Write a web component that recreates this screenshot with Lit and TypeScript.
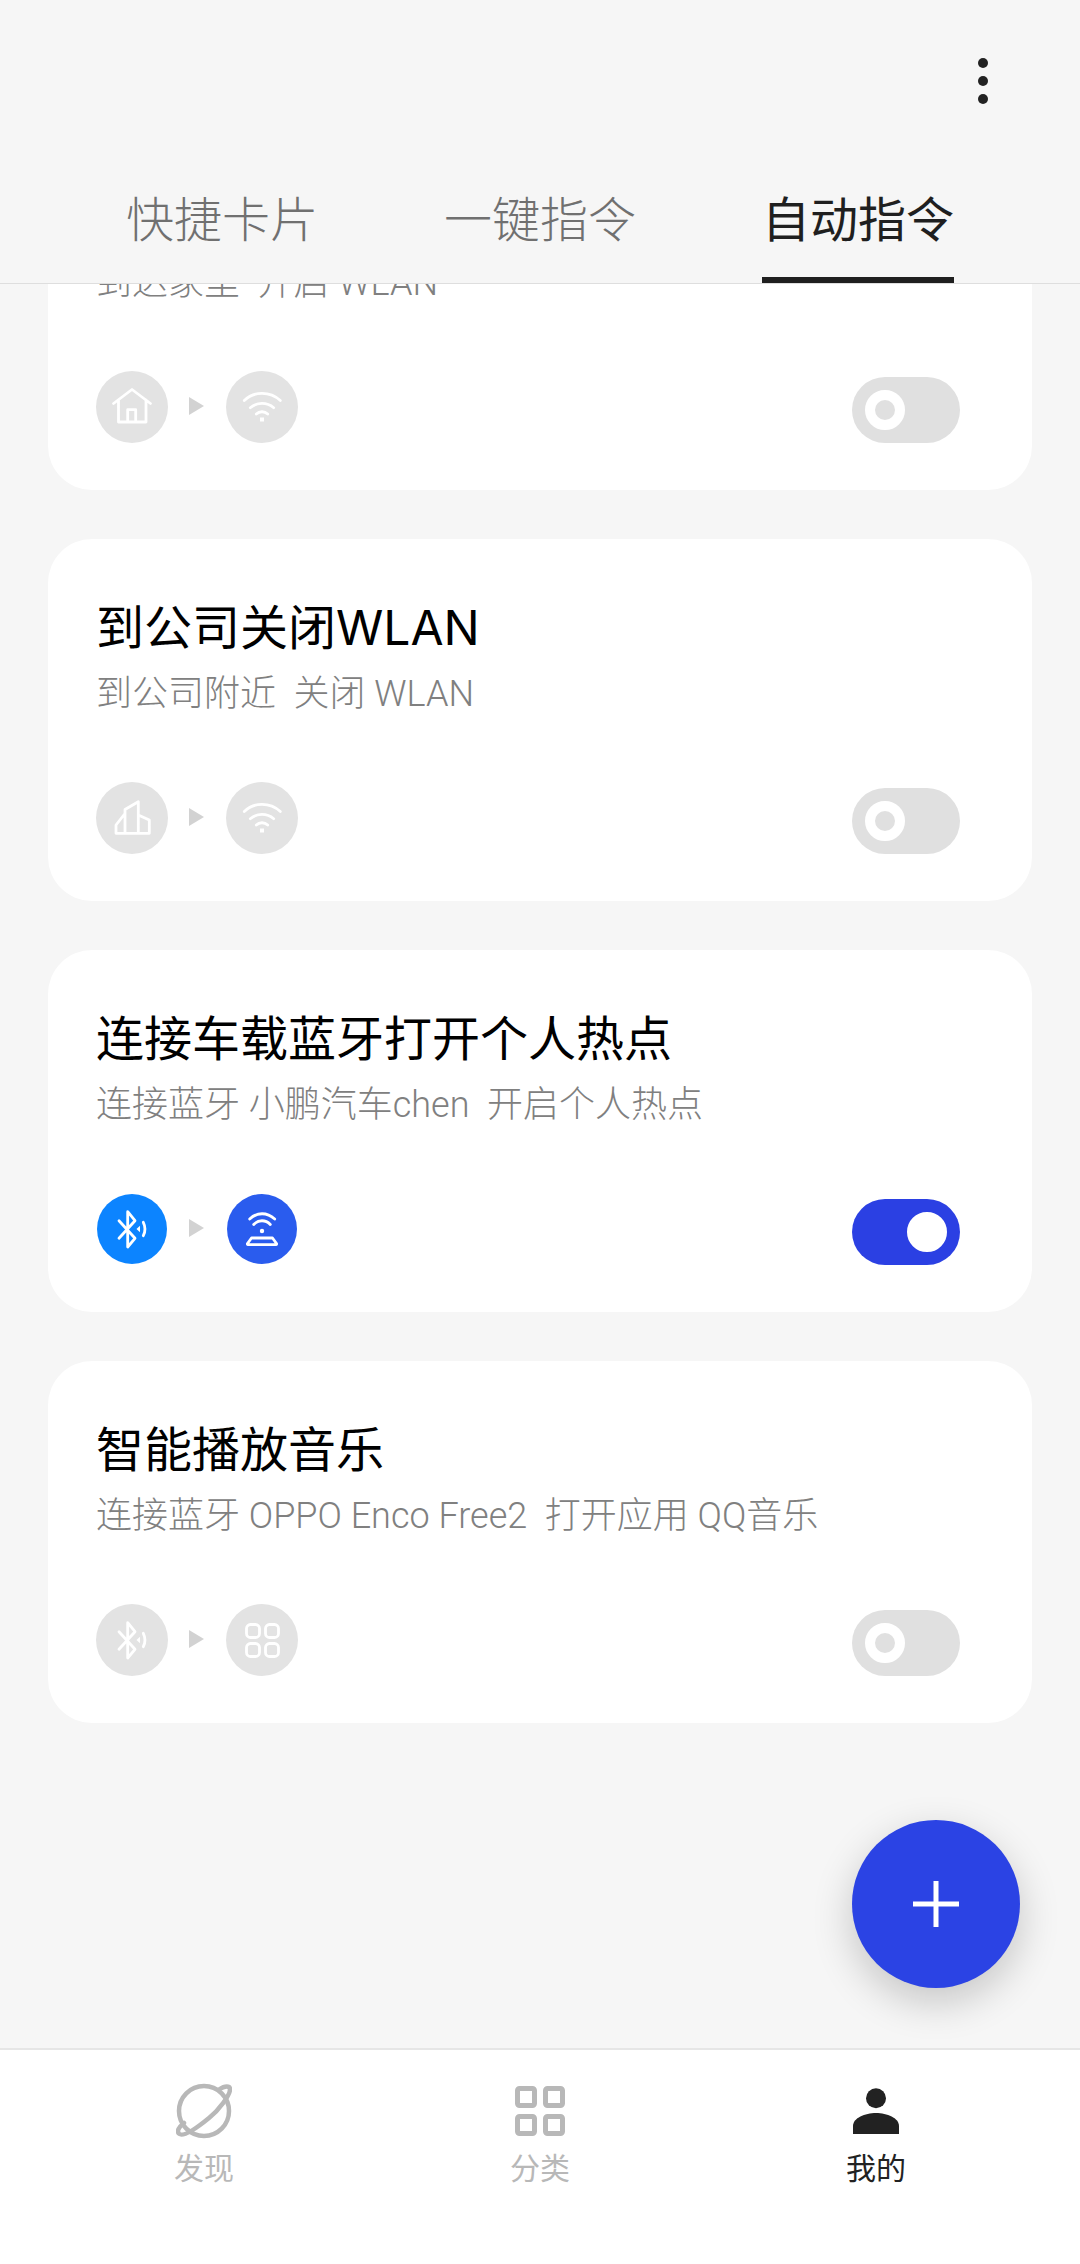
import { LitElement, html, css, svg } from 'lit';

const wifi = svg`
  <path d="M18.3 29.5C28 20 44 20 54.3 29.5M24.3 36.7C31 31 41 31 47.7 36.7M30.3 43C33.5 40 38.5 40 41.7 43" />
  <rect class="solid" x="34" y="46.5" width="4" height="4" />`;

const icons: Record<string, unknown> = {
  home: svg`
    <path d="M17.5 32.5L36 18.5L54.5 32.5M22.5 29V51H50V29M31.7 51V38.7H39.7V51" />`,
  wifi,
  office: svg`
    <path d="M20 51.3H53.3V38L42.3 33M20 51.3V43L29 31.5M29 51.3V27.5L42.3 19.7V51.3" />`,
  bluetooth: svg`
    <path d="M23 27.7L39 45.3L31.7 54V18.7L39 27.7L23 45.3" />
    <path class="solid" d="M40.5 36L44 32.8V39.2Z" />
    <path d="M47.3 29.3C49.4 33.5 49.4 38.5 47.3 42.7" />`,
  hotspot: svg`
    <path d="M23.7 26C31 19 41 19 48.7 26M27.7 31.5C32.5 26.5 39.5 26.5 44.3 31.5" />
    <circle class="solid" cx="36" cy="38" r="2.2" />
    <path d="M25.5 45H46.5L50.5 50.5C50.8 51 50.6 51.7 50 51.7H22C21.4 51.7 21.2 51 21.5 50.5Z" />`,
  apps: svg`
    <rect x="20.5" y="20.5" width="13" height="13" rx="4" />
    <rect x="39.5" y="20.5" width="13" height="13" rx="4" />
    <rect x="20.5" y="39.5" width="13" height="13" rx="4" />
    <rect x="39.5" y="39.5" width="13" height="13" rx="4" />`,
};

// the first card is scrolled under the header, its title can't be seen
const cards = [
  { title: '', sub: '到达家里  开启 WLAN', from: 'home', to: 'wifi', on: false },
  { title: '到公司关闭WLAN', sub: '到公司附近  关闭 WLAN', from: 'office', to: 'wifi', on: false },
  { title: '连接车载蓝牙打开个人热点', sub: '连接蓝牙 小鹏汽车chen  开启个人热点', from: 'bluetooth', to: 'hotspot', on: true },
  { title: '智能播放音乐', sub: '连接蓝牙 OPPO Enco Free2  打开应用 QQ音乐', from: 'bluetooth', to: 'apps', on: false },
];

export class AppRoot extends LitElement {
  static styles = css`
    :host {
      display: flex;
      flex-direction: column;
      width: 1080px;
      height: 2264px;
      background: #f6f6f6;
      font-family: "Inter", "Noto Sans CJK SC", sans-serif;
    }
    .top {
      flex: none;
      height: 284px;
      box-sizing: border-box;
      border-bottom: 1px solid #dedede;
      position: relative;
      z-index: 1;
      background: #f6f6f6;
    }
    .bar {
      height: 188px;
      box-sizing: border-box;
      padding: 58px 92px 0 0;
      display: flex;
      justify-content: flex-end;
    }
    .dots {
      display: flex;
      flex-direction: column;
      gap: 8px;
    }
    .dots i {
      width: 10px;
      height: 10px;
      border-radius: 50%;
      background: #222;
    }
    .tabs {
      display: flex;
      justify-content: center;
      gap: 126px;
    }
    .tab {
      width: 192px;
      height: 95px;
      box-sizing: border-box;
      padding-bottom: 25px;
      font-size: 48px;
      line-height: 64px;
      text-align: center;
      white-space: nowrap;
      color: #707070;
      font-weight: 300;
    }
    .tab.active {
      color: #1f1f1f;
      font-weight: 400;
      border-bottom: 6px solid #1f1f1f;
    }
    .list {
      flex: 1;
      min-height: 0;
      overflow: hidden;
      position: relative;
      display: flex;
      flex-direction: column;
      gap: 49px;
      padding: 0 48px;
    }
    .card {
      flex: none;
      height: 362px;
      box-sizing: border-box;
      padding: 62px 72px 0 48px;
      background: #fff;
      border-radius: 44px;
    }
    .card:first-child {
      margin-top: -156px;
    }
    .title {
      height: 54px;
      font-size: 48px;
      line-height: 54px;
      color: #000;
    }
    .sub {
      margin-top: 17px;
      font-family: "Roboto", "Noto Sans CJK SC", sans-serif;
      font-size: 36px;
      line-height: 44px;
      color: #808080;
      font-weight: 300;
      white-space: pre;
    }
    .row {
      margin-top: 66px;
      display: flex;
      align-items: flex-end;
    }
    .ic {
      width: 70px;
      height: 70px;
      margin: 1px;
      border-radius: 50%;
      background: #e3e3e3;
      box-shadow: 0 0 0 1px #e3e3e3;
    }
    .ic svg {
      display: block;
      width: 70px;
      height: 70px;
      fill: none;
      stroke: #fff;
      stroke-width: 2.8;
      stroke-linecap: round;
      stroke-linejoin: round;
    }
    .ic .solid {
      fill: #fff;
      stroke: none;
    }
    .ic.on {
      box-shadow: none;
    }
    .ic.bluetooth.on {
      background: #0c84ff;
    }
    .ic.hotspot.on {
      background: #2a5cee;
    }
    .arrow {
      align-self: center;
      width: 0;
      height: 0;
      margin: -2px 22px 0 21px;
      border-left: 15px solid #d2d2d2;
      border-top: 9px solid transparent;
      border-bottom: 9px solid transparent;
    }
    .sw {
      margin-left: auto;
      width: 108px;
      height: 66px;
      border-radius: 33px;
      background: #e0e0e0;
      box-sizing: border-box;
      padding: 13px;
      display: flex;
    }
    .knob {
      width: 40px;
      height: 40px;
      box-sizing: border-box;
      border-radius: 50%;
      border: 10px solid #fff;
    }
    .sw.on {
      background: #2b40e3;
      justify-content: flex-end;
    }
    .sw.on .knob {
      background: #fff;
    }
    .fab {
      position: absolute;
      left: 852px;
      top: 1536px;
      width: 168px;
      height: 168px;
      border-radius: 50%;
      background: #2b43e4;
      box-shadow: 0 14px 40px rgba(0, 0, 0, 0.2);
      display: flex;
      align-items: center;
      justify-content: center;
    }
    .fab svg {
      width: 46px;
      height: 46px;
      stroke: #fff;
      stroke-width: 5;
    }
    .nav {
      flex: none;
      height: 216px;
      box-sizing: border-box;
      border-top: 2px solid #e6e6e6;
      background: #fff;
      padding: 0 36px;
      display: grid;
      grid-template-columns: repeat(3, 1fr);
      position: relative;
      z-index: 1;
    }
    .item {
      display: flex;
      flex-direction: column;
      align-items: center;
      padding-top: 33px;
      color: #b8b8b8;
      font-size: 30px;
      line-height: 40px;
    }
    .item.active {
      color: #222;
    }
    .item .glyph {
      height: 56px;
      margin-bottom: 9px;
      display: flex;
      align-items: center;
    }
    .item svg {
      display: block;
    }
  `;

  renderIcon(name: string, on: boolean) {
    return html`<div class="ic ${name} ${on ? 'on' : ''}">
      <svg viewBox="1 1 70 70">${icons[name]}</svg>
    </div>`;
  }

  render() {
    return html`
      <div class="top">
        <div class="bar"><div class="dots"><i></i><i></i><i></i></div></div>
        <div class="tabs">
          <div class="tab">快捷卡片</div>
          <div class="tab">一键指令</div>
          <div class="tab active">自动指令</div>
        </div>
      </div>

      <div class="list">
        ${cards.map(
          (c) => html`
            <div class="card">
              <div class="title">${c.title}</div>
              <div class="sub">${c.sub}</div>
              <div class="row">
                ${this.renderIcon(c.from, c.on)}
                <div class="arrow"></div>
                ${this.renderIcon(c.to, c.on)}
                <div class="sw ${c.on ? 'on' : ''}"><div class="knob"></div></div>
              </div>
            </div>
          `
        )}
        <div class="fab">
          <svg viewBox="0 0 46 46"><path d="M23 0V46M0 23H46" /></svg>
        </div>
      </div>

      <div class="nav">
        <div class="item">
          <div class="glyph">
            <svg width="56" height="56" viewBox="0 0 56 56" fill="none" stroke="#b8b8b8" stroke-width="4.5" stroke-linecap="round">
              <circle cx="28" cy="28" r="25" />
              <path d="M43 6.5C49 2.5 54 2.5 54 6.5C54 12 43 27 33 35C22 44 8 54 3.5 51C0 48.5 3 44 8 40" />
            </svg>
          </div>
          发现
        </div>
        <div class="item">
          <div class="glyph">
            <svg width="50" height="50" viewBox="0 0 50 50" fill="none" stroke="#b8b8b8" stroke-width="5">
              <rect x="2.5" y="2.5" width="17" height="17" rx="2" />
              <rect x="30.5" y="2.5" width="17" height="17" rx="2" />
              <rect x="2.5" y="30.5" width="17" height="17" rx="2" />
              <rect x="30.5" y="30.5" width="17" height="17" rx="2" />
            </svg>
          </div>
          分类
        </div>
        <div class="item active">
          <div class="glyph">
            <svg width="46" height="46" viewBox="0 0 46 46" fill="#222">
              <circle cx="23" cy="10.3" r="10" />
              <path d="M0 46V38C0 30 12 25 23 25C34 25 46 30 46 38V46Z" />
            </svg>
          </div>
          我的
        </div>
      </div>
    `;
  }
}
customElements.define('app-root', AppRoot);
